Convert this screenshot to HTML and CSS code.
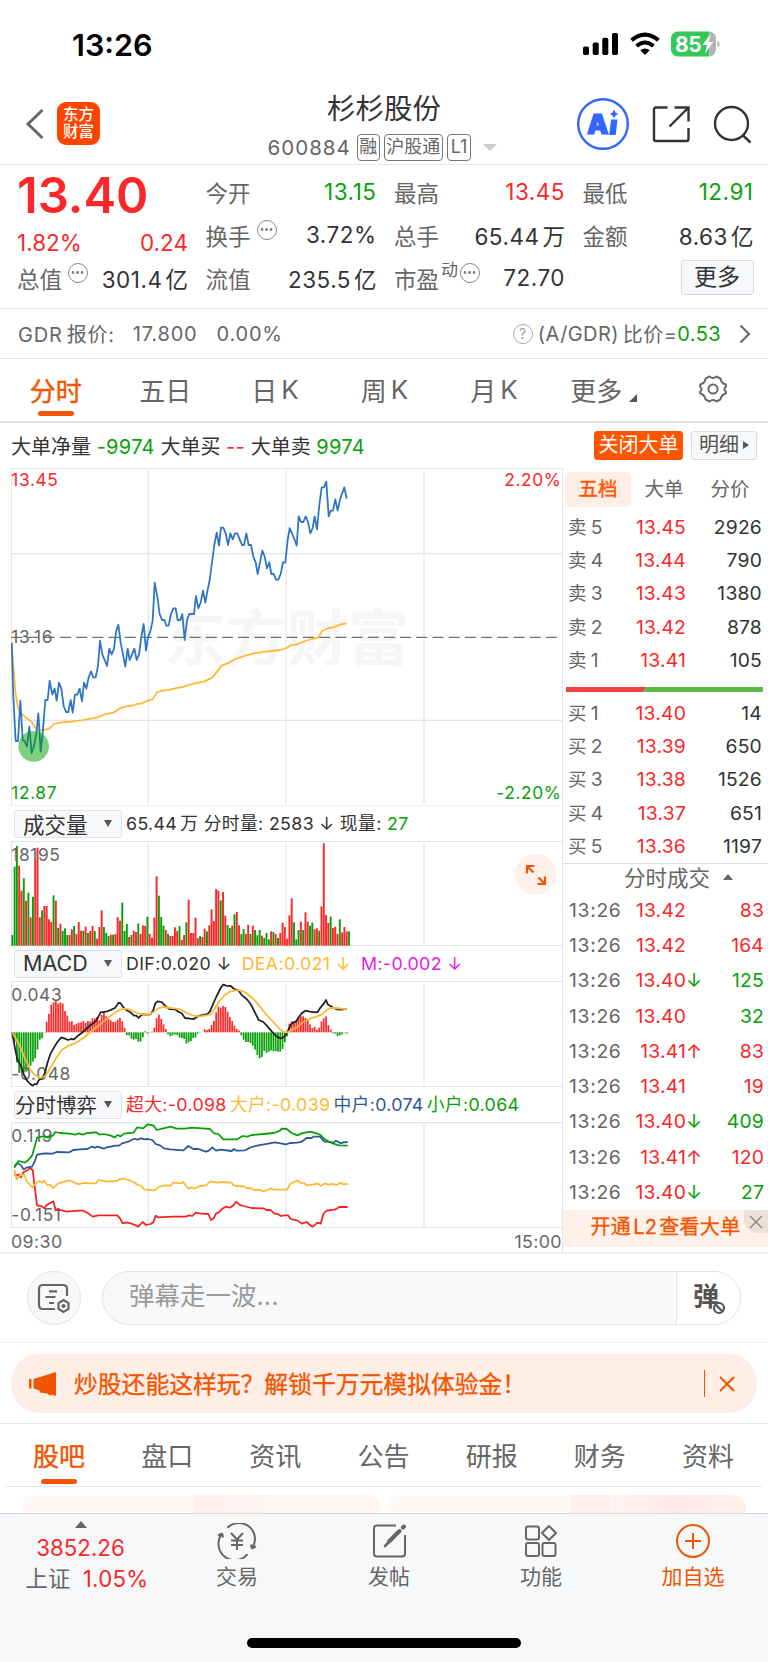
FILE: index.html
```html
<!DOCTYPE html>
<html lang="zh-CN">
<head>
    <meta charset="UTF-8">
    <meta name="viewport" content="width=device-width, initial-scale=1.0">
    <title>杉杉股份 600884</title>
    <link rel="stylesheet" href="styles.css">
</head>
<body>
    <div class="status-bar">
        <span class="clock">13:26</span>
        <div class="status-icons">
            <svg width="36" height="24" viewBox="0 0 36 24">
                <rect x="0" y="14.5" width="6" height="8.5" rx="1.8"/>
                <rect x="9.7" y="10.5" width="6" height="12.5" rx="1.8"/>
                <rect x="19.3" y="5.7" width="6" height="17.3" rx="1.8"/>
                <rect x="29" y="1" width="6" height="22" rx="1.8"/>
            </svg>
            <svg width="30" height="24" viewBox="0 0 30 24">
                <g fill="none" stroke="#000" stroke-width="4">
                    <path d="M1.6 8.2Q15-3 28.4 8.2"/>
                    <path d="M6.6 14Q15 6.9 23.4 14"/>
                </g>
                <path d="M10.3 18.2Q15 14.6 19.7 18.2L15 23Z"/>
            </svg>
            <svg width="49" height="26" viewBox="0 0 49 26">
                <defs><clipPath id="cell"><rect x="0" y="0.5" width="45" height="25" rx="7"/></clipPath></defs>
                <g clip-path="url(#cell)">
                    <rect width="38.5" height="26" fill="#34c759"/>
                    <rect x="38.5" width="8" height="26" fill="#b3b3b3"/>
                </g>
                <path d="M46.5 9.5Q48.6 10.5 48.6 13T46.5 16.5Z" fill="#b3b3b3"/>
                <text class="cell-text" x="4" y="20.6">85</text>
                <path d="M39.5 3L31.5 14H36L34 22.5L42.3 11H37.6Z" fill="#fff"/>
            </svg>
        </div>
    </div>

    <header class="header">
        <div class="header-left">
            <svg width="20" height="32" viewBox="0 0 20 32" fill="none" stroke="#666" stroke-width="3"><path d="M17.5 2L3 16L17.5 30"/></svg>
            <div class="brand">东方<br>财富</div>
        </div>
        <div class="title">
            <h1>杉杉股份</h1>
            <div class="code">
                <span class="code-num">600884</span>
                <span class="tag">融</span>
                <span class="tag">沪股通</span>
                <span class="tag">L1</span>
                <i class="tri-down"></i>
            </div>
        </div>
        <div class="header-right">
            <svg width="52" height="52" viewBox="0 0 52 52">
                <circle cx="26" cy="26" r="24.8" fill="#fff" stroke="#3366ff" stroke-width="2.4"/>
                <text class="ai-text" x="10" y="36">A</text>
                <path d="M34 21.5H40.5L38.7 37H32.2Z" fill="#3366ff"/>
                <path d="M37 11.5L38.6 14.4L41.2 16L38.6 17.6L37 20.3L35.4 17.6L32.8 16L35.4 14.4Z" fill="#3366ff"/>
            </svg>
            <svg width="38" height="38" viewBox="0 0 38 38" fill="none" stroke="#333" stroke-width="2.4">
                <path d="M15.5 2.5H4Q2 2.5 2 4.5V34Q2 36 4 36H34.5Q36.5 36 36.5 34V23"/>
                <path d="M22.5 2.5H36.5V16.5M36 3L17.5 21.5"/>
            </svg>
            <svg width="39" height="39" viewBox="0 0 39 39" fill="none" stroke="#333" stroke-width="2.4">
                <circle cx="18.5" cy="18.5" r="16.5"/>
                <path d="M29.5 30L37.5 37.5"/>
            </svg>
        </div>
    </header>

    <section class="quote">
        <div class="quote-col quote-main">
            <div class="price red">13.40</div>
            <div class="change red"><span>1.82%</span><span>0.24</span></div>
            <div class="cell last"><label>总值</label><i class="more-dot"></i><b>301.4<em>亿</em></b></div>
        </div>
        <div class="quote-col">
            <div class="cell"><label>今开</label><b class="green">13.15</b></div>
            <div class="cell"><label>换手</label><i class="more-dot"></i><b>3.72%</b></div>
            <div class="cell"><label>流值</label><b>235.5<em>亿</em></b></div>
        </div>
        <div class="quote-col">
            <div class="cell"><label>最高</label><b class="red">13.45</b></div>
            <div class="cell"><label>总手</label><b>65.44<em>万</em></b></div>
            <div class="cell"><label>市盈</label><sup>动</sup><i class="more-dot tight"></i><b>72.70</b></div>
        </div>
        <div class="quote-col">
            <div class="cell"><label>最低</label><b class="green">12.91</b></div>
            <div class="cell"><label>金额</label><b>8.63<em>亿</em></b></div>
            <div class="cell"><button class="more-btn">更多</button></div>
        </div>
    </section>

    <section class="gdr">
        <span class="gdr-name">GDR<em>报价:</em></span>
        <span class="gdr-price">17.800</span>
        <span>0.00%</span>
        <span class="gdr-ratio"><i class="help">?</i>(A/GDR)<em>比价=</em><span class="green">0.53</span></span>
        <svg width="12" height="20" viewBox="0 0 12 20" fill="none" stroke="#666" stroke-width="2"><path d="M1.5 1.5L10 10L1.5 18.5"/></svg>
    </section>

    <nav class="tabs period-tabs">
        <a class="active">分时</a>
        <a>五日</a>
        <a>日<em>K</em></a>
        <a>周<em>K</em></a>
        <a>月<em>K</em></a>
        <a>更多<i class="tri-corner"></i></a>
        <a>
            <svg width="30" height="28" viewBox="0 0 30 28" fill="none" stroke="#666" stroke-width="2">
                <path d="M11.5 1.5Q15 4.5 18.5 1.5L22.5 3.6Q23 8 27.8 9.5V12Q25 14 27.8 16.5V18.5Q23 20 22.5 24.4L18.5 26.5Q15 23.5 11.5 26.5L7.5 24.4Q7 20 2.2 18.5V16.5Q5 14 2.2 12V9.5Q7 8 7.5 3.6Z" stroke-linejoin="round"/>
                <circle cx="15" cy="14" r="4.6"/>
            </svg>
        </a>
    </nav>

    <section class="big-order">
        <span>大单净量 <b class="green">-9974</b> 大单买 <b class="red">--</b> 大单卖 <b class="green">9974</b></span>
        <div class="big-order-btns">
            <button class="close-big">关闭大单</button>
            <button class="detail">明细<i class="tri-right"></i></button>
        </div>
    </section>

    <main class="board">
        <div class="charts">
            <svg class="plot price-plot" viewBox="33 24 1653 1014">
                <text class="watermark" x="492" y="602">东方财富</text>
                <path class="grid" d="M445 30V1032M858 30V1032M1272 30V1032M34 281H1686M34 781H1686"/>
                <path class="grid" d="M34 25H1686M34 1038H1686M34.5 24V1038"/>
                <path class="mid-line" d="M34 532H1686"/>
                <polyline class="line avg" points="35,548 40,620 46,695 54,745 65,762 80,775 95,785 105,803 115,811 130,810 148,806 162,792 185,787 215,785 250,780 292,772 315,763 340,758 363,743 385,738 402,736 410,732 422,731 445,722 458,718 470,698 485,692 510,689 525,685 552,680 570,674 595,668 612,665 637,653 665,617 690,607 705,597 740,586 765,579 800,575 840,570 860,564 872,556 890,553 915,543 935,537 955,533 966,513 985,505 1005,500 1020,494 1040,490"/>
                <polyline class="line price-line" points="35,548 40,710 47,843 54,843 61,722 68,840 74,843 81,860 88,800 95,880 102,858 109,820 115,760 122,875 129,810 136,720 143,720 149,662 157,704 164,686 170,722 177,668 184,686 191,738 198,756 205,756 212,720 218,758 225,704 232,704 239,686 246,724 252,668 259,686 266,652 273,634 280,652 287,652 294,617 300,542 307,583 314,600 321,618 328,566 335,583 342,566 348,515 355,494 362,548 369,583 376,620 383,566 389,600 396,583 403,566 410,600 417,583 424,530 431,492 438,572 444,532 451,514 458,482 464,368 472,410 479,462 486,480 493,480 499,497 506,497 513,462 520,445 527,445 533,480 541,480 547,462 554,540 561,480 568,462 582,462 588,408 595,445 602,428 609,392 616,428 622,395 629,360 637,300 643,255 650,218 657,257 663,203 670,203 677,220 684,255 691,220 698,238 705,220 712,220 719,238 726,255 732,255 739,220 746,255 753,255 760,290 767,307 773,342 780,307 787,272 794,290 801,325 808,307 814,342 821,342 828,359 835,359 842,342 849,307 856,307 863,240 869,204 876,220 883,237 890,257 896,169 903,186 910,186 917,169 924,186 931,220 938,204 944,169 951,208 958,135 965,82 972,82 979,65 986,169 992,152 999,152 1006,118 1013,152 1020,118 1033,82 1040,116"/>
                <circle cx="101" cy="859" r="46" fill="#00a000" fill-opacity="0.5"/>
                <text class="axis red" x="34" y="77">13.45</text>
                <text class="axis red" x="1684" y="77" text-anchor="end">2.20%</text>
                <text class="axis" x="34" y="548">13.16</text>
                <text class="axis green" x="34" y="1017">12.87</text>
                <text class="axis green" x="1684" y="1017" text-anchor="end">-2.20%</text>
            </svg>

            <div class="ind-head">
                <button class="ind-select">成交量<i class="tri-select"></i></button>
                <span class="ind-vals">65.44<em class="unit">万</em> 分时量: 2583 <i class="arr">↓</i> 现量: <b class="green">27</b></span>
            </div>
            <div class="plot-wrap">
                <svg class="plot volume-plot" viewBox="33 123 1653 315">
                    <path class="grid" d="M445 130V437M858 130V437M1272 130V437M34 124H1686M34 437H1686M34.5 123V438"/>
                    <g id="volumeBars"></g>
                    <text class="axis" x="34" y="182">18195</text>
                </svg>
                <div class="expand">
                    <svg width="22" height="22" viewBox="0 0 22 22" fill="none" stroke="#f25500" stroke-width="2.2">
                        <path d="M2 9.5V2H9.5M2 2L8.5 8.5M20 12.5V20H12.5M20 20L13.5 13.5"/>
                    </svg>
                </div>
            </div>

            <div class="ind-head">
                <button class="ind-select">MACD<i class="tri-select"></i></button>
                <span class="ind-vals macd-vals"><span>DIF:0.020 <i class="arr">↓</i></span><span class="amber">DEA:0.021 <i class="arr">↓</i></span><span class="magenta">M:-0.002 <i class="arr">↓</i></span></span>
            </div>
            <svg class="plot macd-plot" viewBox="33 3 1653 318">
                <path class="grid" d="M445 12V320M858 12V320M1272 12V320M34 4H1686M34 320H1686M34.5 3V321"/>
                <g id="macdBars"></g>
                <text class="axis" x="34" y="63">0.043</text>
                <text class="axis" x="34" y="301">-0.048</text>
                <polyline class="line dif" points="37,160 45,205 52,238 62,256 72,285 82,303 92,313 98,317 104,312 110,313 116,301 126,295 134,281 142,250 152,220 162,203 172,186 184,172 193,175 204,180 213,177 222,178 234,167 244,160 255,150 268,138 280,130 290,120 302,97 322,94 345,84 356,68 362,70 370,82 380,91 390,96 402,107 409,107 416,114 426,103 440,104 452,103 460,90 466,70 473,64 485,66 494,76 508,87 525,88 535,95 545,100 555,114 570,116 582,117 588,112 600,107 622,102 630,94 640,70 650,48 662,24 670,14 678,17 692,18 703,27 716,32 727,47 740,57 752,72 762,92 776,120 790,126 803,140 815,154 828,168 835,172 842,175 850,172 857,166 864,152 872,134 880,127 888,125 896,112 905,100 916,92 930,95 945,97 953,96 962,82 972,70 978,60 984,74 992,78 1000,84 1012,88 1025,89 1040,86"/>
                <polyline class="line dea" points="37,158 50,180 62,204 75,235 90,267 100,281 112,290 122,294 132,291 142,279 155,257 170,232 185,210 200,200 225,190 250,174 275,153 300,133 322,115 345,98 360,89 375,86 390,89 410,99 430,104 450,103 462,95 475,85 490,81 515,84 540,88 560,99 580,107 600,109 620,106 632,103 645,85 660,61 675,45 690,35 705,31 720,31 735,37 750,48 765,62 780,80 800,105 820,126 840,148 850,155 862,157 875,151 890,142 910,126 930,116 950,110 965,103 980,91 990,84 1005,84 1025,86 1040,87"/>
            </svg>

            <div class="ind-head">
                <button class="ind-select wide-select">分时博弈<i class="tri-select"></i></button>
                <span class="ind-vals game-vals"><span class="red">超大:-0.098</span><span class="amber">大户:-0.039</span><span class="navy">中户:0.074</span><span class="green">小户:0.064</span></span>
            </div>
            <svg class="plot game-plot" viewBox="33 426 1653 318">
                <path class="grid" d="M445 434V742M858 434V742M1272 434V742M34 428H1686M34 743H1686M34.5 426V744"/>
                <text class="axis" x="34" y="485">0.119</text>
                <text class="axis" x="34" y="722">-0.151</text>
                <polyline class="line super" points="43,583 50,586 56,583 63,592 71,576 84,570 90,564 98,570 104,620 111,676 126,679 133,685 140,675 152,668 160,664 167,690 180,690 200,695 235,692 250,692 265,700 278,710 295,706 330,706 352,706 360,715 368,730 380,727 395,731 415,740 428,726 438,735 452,732 460,727 467,707 475,712 520,710 557,710 567,706 577,708 587,698 600,700 625,702 633,720 642,714 648,700 655,698 665,688 677,680 690,683 700,676 708,665 718,674 730,678 755,684 790,685 800,690 812,690 822,700 835,703 842,708 855,706 864,706 872,717 893,722 905,731 920,726 930,735 937,740 945,735 952,728 962,731 970,702 980,692 995,690 1007,688 1018,681 1043,681"/>
                <polyline class="line big" points="43,570 50,598 60,587 72,584 80,603 90,615 98,622 105,612 118,603 126,608 133,602 142,615 150,614 160,624 172,612 185,607 208,601 222,607 235,613 250,609 288,610 296,600 308,602 320,605 350,603 360,597 370,596 385,600 400,606 410,613 425,618 432,628 465,631 475,621 495,616 512,617 520,608 545,610 550,606 565,626 575,622 582,626 600,618 618,616 630,605 640,606 655,608 665,606 695,608 700,616 710,618 732,619 740,624 755,625 762,630 780,630 788,634 805,630 812,625 820,629 862,629 870,612 882,606 893,602 905,610 912,609 920,616 935,614 955,611 962,618 975,610 985,614 1000,612 1010,615 1022,608 1030,613 1043,612"/>
                <polyline class="line mid" points="43,560 50,550 58,552 64,558 71,568 82,562 96,560 104,545 111,524 135,520 158,521 170,516 208,517 220,510 240,508 262,507 275,500 285,503 292,500 312,506 320,502 348,497 357,497 366,490 385,485 402,476 412,479 422,475 435,478 445,477 457,480 467,492 480,496 492,505 510,508 550,511 565,498 580,507 595,507 617,515 627,512 637,502 648,512 662,509 695,513 702,507 710,512 735,511 755,501 775,496 805,491 825,487 858,493 870,489 892,488 905,485 920,474 935,474 940,470 960,470 972,484 990,486 1000,488 1008,482 1022,490 1030,487 1043,486"/>
                <polyline class="line small" points="43,563 50,552 56,543 75,548 85,540 96,527 104,500 111,473 128,469 145,473 158,467 166,456 180,459 208,461 225,464 237,460 248,464 262,459 290,457 298,464 312,462 330,466 345,472 352,465 362,469 372,461 400,458 412,442 430,445 442,433 460,436 470,450 490,445 512,440 530,446 555,446 575,443 605,445 630,447 642,460 655,462 670,478 712,478 728,468 742,470 755,465 790,462 822,459 840,452 845,446 860,447 875,459 892,466 905,460 930,455 950,460 962,465 972,476 985,484 1000,491 1018,496 1043,497"/>
            </svg>
            <div class="time-axis"><span>09:30</span><span>15:00</span></div>
        </div>

        <aside class="side">
            <div class="side-tabs"><a class="active">五档</a><a>大单</a><a>分价</a></div>
            <ul class="levels">
                <li><label>卖<em>5</em></label><b>13.45</b><span>2926</span></li>
                <li><label>卖<em>4</em></label><b>13.44</b><span>790</span></li>
                <li><label>卖<em>3</em></label><b>13.43</b><span>1380</span></li>
                <li><label>卖<em>2</em></label><b>13.42</b><span>878</span></li>
                <li><label>卖<em>1</em></label><b>13.41</b><span>105</span></li>
            </ul>
            <svg class="ratio" width="197" height="5" viewBox="0 0 197 5"><path fill="#ee4444" d="M0 0H81L77 5H0Z"/><path fill="#5bb947" d="M81 0H197V5H77Z"/></svg>
            <ul class="levels">
                <li><label>买<em>1</em></label><b>13.40</b><span>14</span></li>
                <li><label>买<em>2</em></label><b>13.39</b><span>650</span></li>
                <li><label>买<em>3</em></label><b>13.38</b><span>1526</span></li>
                <li><label>买<em>4</em></label><b>13.37</b><span>651</span></li>
                <li><label>买<em>5</em></label><b>13.36</b><span>1197</span></li>
            </ul>
            <div class="ticks-head">分时成交<i class="tri-up"></i></div>
            <ul class="ticks">
                <li><time>13:26</time><b>13.42</b><i></i><span class="red">83</span></li>
                <li><time>13:26</time><b>13.42</b><i></i><span class="red">164</span></li>
                <li><time>13:26</time><b>13.40</b><i class="green">↓</i><span class="green">125</span></li>
                <li><time>13:26</time><b>13.40</b><i></i><span class="green">32</span></li>
                <li><time>13:26</time><b>13.41</b><i class="red">↑</i><span class="red">83</span></li>
                <li><time>13:26</time><b>13.41</b><i></i><span class="red">19</span></li>
                <li><time>13:26</time><b>13.40</b><i class="green">↓</i><span class="green">409</span></li>
                <li><time>13:26</time><b>13.41</b><i class="red">↑</i><span class="red">120</span></li>
                <li><time>13:26</time><b>13.40</b><i class="green">↓</i><span class="green">27</span></li>
            </ul>
            <div class="l2-promo">
                开通<em>L2</em>查看大单
                <span class="l2-close"><svg width="14" height="14" viewBox="0 0 14 14" stroke="#8c8580" stroke-width="1.4"><path d="M1 1L13 13M13 1L1 13"/></svg></span>
            </div>
        </aside>
    </main>

    <section class="danmu">
        <div class="danmu-set">
            <svg width="34" height="31" viewBox="0 0 34 31" fill="none" stroke="#666" stroke-width="2.2">
                <path d="M18 26H6Q2 26 2 22V6Q2 2 6 2H26Q30 2 30 6V13M12 8.3H20M8.5 14H18.5M12 20H17"/>
                <path d="M26.5 17L31.5 20V26L26.5 29L21.5 26V20Z"/>
                <circle cx="26.5" cy="23" r="1" fill="#666"/>
            </svg>
        </div>
        <div class="danmu-box">
            <span class="danmu-input">弹幕走一波...</span>
            <span class="danmu-toggle">弹<svg width="14" height="14" viewBox="0 0 14 14" fill="#fff" stroke="#555" stroke-width="2.2"><circle cx="7" cy="7" r="5"/><path d="M3.5 3.5L10.5 10.5"/></svg></span>
        </div>
    </section>

    <section class="notice-wrap">
        <div class="notice">
            <svg width="28" height="26" viewBox="0 0 28 26" fill="#f25500"><path d="M0 8H2.5V17.5H0ZM4.5 8L27 1V25L22 23.5L21.5 25L18 22.5L11 21.5L10.5 19.5L4.5 17.5Z"/></svg>
            <span class="notice-text">炒股还能这样玩？解锁千万元模拟体验金！</span>
            <span class="notice-close"><svg width="16" height="16" viewBox="0 0 16 16" stroke="#f25500" stroke-width="2"><path d="M1 1L15 15M15 1L1 15"/></svg></span>
        </div>
    </section>

    <nav class="tabs info-tabs">
        <a class="active">股吧</a>
        <a>盘口</a>
        <a>资讯</a>
        <a>公告</a>
        <a>研报</a>
        <a>财务</a>
        <a>资料</a>
    </nav>
    <div class="cards"><div class="card"></div><div class="card card-alt"></div></div>

    <footer class="bottom-nav">
        <div class="nav-index">
            <i class="tri-up"></i>
            <span class="red">3852.26</span>
            <span><em>上证</em><b class="red">1.05%</b></span>
        </div>
        <div class="nav-item">
            <svg width="40" height="36" viewBox="0 0 40 36" fill="none" stroke="#666" stroke-width="2">
                <path d="M10.5 4.8A16 16 0 0 1 34.8 25.5L39 23.5M34.8 25.500L34 21.5M30.5 31.2A16 16 0 0 1 5.2 10.5L1 12.5M5.2 10.5L6 14.5"/>
                <path d="M14 10L20 16.5L26 10M20 16.5V27M14 17.5H26M14 22H26"/>
            </svg>
            <span>交易</span>
        </div>
        <div class="nav-item">
            <svg width="34" height="36" viewBox="0 0 34 36" fill="none" stroke="#666" stroke-width="2">
                <path d="M24 2.5H5Q2 2.5 2 5.5V30.5Q2 33.5 5 33.5H30Q33 33.5 33 30.5V12"/>
                <path d="M27.5 8L17 18.5M31 4.5L32 3.5" stroke-width="4" stroke-linecap="round"/>
                <path d="M20 16L13 23" stroke-width="2.6" stroke-linecap="round"/>
            </svg>
            <span>发帖</span>
        </div>
        <div class="nav-item">
            <svg width="32" height="36" viewBox="0 0 32 36" fill="none" stroke="#666" stroke-width="2">
                <rect x="1" y="3.5" width="13" height="13" rx="2"/>
                <rect x="1" y="20" width="13" height="13" rx="2"/>
                <rect x="17.5" y="20" width="13" height="13" rx="2"/>
                <path d="M24 3L31 10L24 17L17 10Z" stroke-linejoin="round"/>
            </svg>
            <span>功能</span>
        </div>
        <div class="nav-item orange">
            <svg width="36" height="36" viewBox="0 0 36 36" fill="none" stroke="#f25500" stroke-width="2">
                <circle cx="18" cy="18" r="16"/>
                <path d="M10 18H26M18 10V26"/>
            </svg>
            <span>加自选</span>
        </div>
        <div class="home-bar"></div>
    </footer>

    <script src="script.js"></script>
</body>
</html>
```

FILE: styles.css
```css
* {
    box-sizing: border-box;
    margin: 0;
    padding: 0;
}

body {
    width: 768px;
    height: 1662px;
    overflow: hidden;
    background: #fff;
    color: #333;
    font-family: 'Inter', 'Noto Sans CJK SC', sans-serif;
}

em, i, b, h1 {
    font-style: normal;
    font-weight: 400;
}

ul { list-style: none; }

button {
    font-family: inherit;
    color: inherit;
    white-space: nowrap;
}

svg { display: block; flex: none; }

.red { color: #fa2828; fill: #fa2828; }
.green { color: #0aa00a; fill: #0aa00a; }
.amber { color: #ffb833; }
.magenta { color: #e619e6; }
.navy { color: #2b5797; }
.orange { color: #f25500; }

/* status bar */
.status-bar {
    display: flex;
    justify-content: space-between;
    height: 88px;
    padding: 0 48px 0 72px;
    align-items: center;
}

.clock {
    font-size: 30.5px;
    font-weight: 600;
    color: #000;
}

.status-icons {
    display: flex;
    align-items: center;
    gap: 11px;
}

.cell-text {
    font-size: 21px;
    font-weight: 700;
    fill: #fff;
    letter-spacing: -0.5px;
}

/* header */
.header {
    display: grid;
    grid-template-columns: 1fr 220px 1fr;
    height: 77px;
    border-bottom: 1px solid #e6e6e8;
}

.header-left {
    display: flex;
    align-items: center;
    gap: 12px;
    height: 71px;
    padding-left: 25px;
}

.brand {
    width: 43px;
    height: 43px;
    padding-top: 4px;
    border-radius: 9px;
    background: #ff4400;
    color: #fff;
    font-size: 15.5px;
    font-weight: 500;
    line-height: 17px;
    text-align: center;
}

.title {
    display: flex;
    flex-direction: column;
    align-items: center;
}

.title h1 {
    height: 42px;
    font-size: 28.5px;
    line-height: 41px;
}

.code {
    display: flex;
    align-items: center;
    height: 34px;
    margin-right: 3px;
    color: #666;
    font-size: 20.5px;
    white-space: nowrap;
}

.code-num { letter-spacing: 1px; margin-right: 6px; }

.tag {
    height: 27px;
    margin-right: 4px;
    padding: 0 1.5px;
    border: 1px solid #777;
    border-radius: 4px;
    font-size: 18px;
    line-height: 24px;
}

.tag:nth-child(4) { padding: 0 3px; }

.tri-down {
    margin-left: 8px;
    border: 7px solid transparent;
    border-top-color: #ccc;
    border-bottom: 0;
}

.header-right {
    display: flex;
    justify-content: flex-end;
    align-items: center;
    gap: 23px;
    height: 72px;
    padding-right: 16px;
}

.ai-text {
    font-size: 27px;
    font-weight: 900;
    fill: #3366ff;
    stroke: #3366ff;
    stroke-width: 1.2;
}

/* quote */
.quote {
    display: grid;
    grid-template-columns: 171px 171px 171px 171px;
    column-gap: 17.5px;
    height: 144px;
    padding: 5px 16px 0 17px;
    border-bottom: 1px solid #e6e6e8;
}

.price {
    height: 50px;
    font-size: 49px;
    font-weight: 600;
    line-height: 51px;
}

.change {
    display: flex;
    justify-content: space-between;
    height: 36px;
    font-size: 22.5px;
    line-height: 45px;
}

.cell {
    display: flex;
    align-items: center;
    height: 43px;
    white-space: nowrap;
}

.cell label {
    color: #666;
    font-size: 22.5px;
}

.cell b {
    margin-left: auto;
    font-size: 22.5px;
    letter-spacing: 0.5px;
}

.cell em { margin-left: 3px; letter-spacing: 0; }

.cell sup {
    align-self: flex-start;
    margin: 2px 0 0 2px;
    color: #666;
    font-size: 17px;
    line-height: 25px;
}

.more-dot {
    width: 20px;
    height: 20px;
    margin: -9px 0 0 6px;
    border: 1.5px solid #888;
    border-radius: 50%;
    background:
        radial-gradient(circle at 4px 8.5px, #888 1.2px, transparent 1.7px),
        radial-gradient(circle at 8.5px 8.5px, #888 1.2px, transparent 1.7px),
        radial-gradient(circle at 13px 8.5px, #888 1.2px, transparent 1.7px);
}

.more-dot.tight { margin-left: 2px; }

.more-btn {
    width: 73px;
    height: 35px;
    margin: 0 0 0 auto;
    border: 1px solid #d8dbe4;
    border-radius: 3px;
    background: #f7f8fa;
    font-size: 23px;
    line-height: 31px;
}

/* gdr */
.gdr {
    display: flex;
    align-items: center;
    height: 50px;
    padding: 0 17px 0 18px;
    border-bottom: 1px solid #e6e6e8;
    color: #666;
    font-size: 20px;
    letter-spacing: 0.8px;
}

.gdr-name em { margin-left: 4px; }
.gdr-name { margin-right: 18px; }
.gdr-price { margin-right: 19px; }
.gdr-ratio {
    display: flex;
    align-items: center;
    margin-left: auto;
    margin-right: 18px;
    letter-spacing: 0.4px;
}
.gdr-ratio em { margin-left: 4px; }

.help {
    width: 20px;
    height: 20px;
    margin-right: 5px;
    border: 1.5px solid #aaa;
    border-radius: 50%;
    color: #999;
    font-size: 14px;
    line-height: 18px;
    text-align: center;
}

/* tabs */
.tabs {
    display: grid;
    grid-template-columns: repeat(7, 1fr);
    color: #666;
}

.tabs a {
    position: relative;
    display: flex;
    justify-content: center;
    align-items: center;
    padding-bottom: 2px;
    font-size: 26px;
}

.tabs em { margin-left: 4px; padding-top: 1px; }
.tabs .active { color: #f25500; -webkit-text-stroke: 0.4px #f25500; }

.tabs .active::after {
    content: '';
    position: absolute;
    left: calc(50% - 18px);
    bottom: 5px;
    width: 36px;
    height: 5px;
    border-radius: 2.5px;
    background: #f25500;
}

.period-tabs {
    height: 64px;
    padding-left: 1px;
    border-bottom: 2px solid #dfe2ea;
}

.tri-corner {
    margin: 18px 0 0 7px;
    border-left: 8px solid transparent;
    border-bottom: 8px solid #555;
}

/* big orders */
.big-order {
    display: flex;
    justify-content: space-between;
    align-items: center;
    height: 45px;
    padding: 0 11px 1px 11px;
    font-size: 20px;
    white-space: nowrap;
}

.big-order b { font-size: 20px; letter-spacing: 0.3px; }
.big-order-btns { display: flex; gap: 8px; }

.big-order button {
    height: 29px;
    border: 1px solid #ff5500;
    border-radius: 3px;
    font-size: 20px;
    line-height: 25px;
}

.close-big {
    width: 89px;
    background: #ff5500;
    color: #fff !important;
}

.big-order .detail {
    display: flex;
    justify-content: center;
    align-items: center;
    width: 66px;
    border-color: #d8dbe4;
    background: #f7f8fa;
    color: #555;
}

.tri-right {
    margin-left: 4px;
    border: 4px solid transparent;
    border-left: 6px solid #555;
    border-right: 0;
}

/* charts */
.board {
    display: grid;
    grid-template-columns: 562px 206px;
    height: 786px;
    border-bottom: 2px solid #eeeff2;
}

.charts { padding-left: 11px; }

.plot { width: 551px; }
.price-plot { height: 338px; }
.volume-plot { height: 105px; }
.macd-plot, .game-plot { height: 106px; }

.grid { fill: none; stroke: #e0e4ec; stroke-width: 3.5; }
.mid-line { fill: none; stroke: #707070; stroke-width: 4; stroke-dasharray: 33 15.6; }
.line { fill: none; stroke-width: 5.3; stroke-linejoin: round; }
.avg, .dea, .big { stroke: #ffb833; }
.price-line { stroke: #2e75c4; }
.dif { stroke: #222; }
.super { stroke: #f52222; }
.mid { stroke: #2b5797; }
.small { stroke: #0aa00a; }
.bar-up { fill: #fa2828; }
.bar-down { fill: #0aa00a; }

.axis { font-size: 52px; fill: #666; letter-spacing: 1.8px; }
.axis.red { fill: #fa2828; }
.axis.green { fill: #0aa00a; }
.watermark { font-size: 184px; font-weight: 700; fill: #f6f6f7; }

.ind-head {
    display: flex;
    align-items: center;
    height: 35px;
    padding-left: 3px;
}

.ind-select {
    display: flex;
    justify-content: space-between;
    align-items: center;
    width: 108px;
    height: 28px;
    margin-right: 4px;
    padding: 0 9px 1px 8px;
    border: 1px solid #dfe2ea;
    border-radius: 3px;
    background: #f7f8fa;
    font-size: 21.5px;
}

.wide-select { padding-left: 0; font-size: 20.5px; }

.tri-select {
    border: 4px solid transparent;
    border-top: 7px solid #555;
    border-bottom: 0;
}

.ind-vals {
    font-size: 17.8px;
    letter-spacing: 0.35px;
    line-height: 35px;
    white-space: pre;
}

.unit { margin-left: 3px; }
.macd-vals { display: flex; gap: 10px; }
.game-vals { display: flex; gap: 3px; }

.plot-wrap { position: relative; }

.expand {
    position: absolute;
    right: 6px;
    top: 13px;
    display: flex;
    justify-content: center;
    align-items: center;
    width: 41px;
    height: 41px;
    border-radius: 50%;
    background: #fff0e9;
}

.time-axis {
    display: flex;
    justify-content: space-between;
    height: 26px;
    color: #666;
    font-size: 17.8px;
    letter-spacing: 0.4px;
    line-height: 28px;
}

/* right panel */
.side {
    border-left: 1px solid #e0e4ec;
}

.side-tabs {
    display: grid;
    grid-template-columns: 66px 66px 66px;
    margin: 4px 0 4px 2px;
    color: #666;
    font-size: 19.5px;
    line-height: 35px;
    text-align: center;
}

.side-tabs .active {
    border-radius: 5px;
    background: #ffeee6;
    color: #ff5500;
    -webkit-text-stroke: 0.4px #ff5500;
}

.levels li {
    display: grid;
    grid-template-columns: 50px 68px 76px;
    height: 33.2px;
    padding-left: 5px;
    font-size: 19.3px;
    letter-spacing: 0.2px;
    line-height: 33.8px;
}

.levels label { color: #666; font-size: 18.5px; }
.levels label em { margin-left: 4px; font-size: 19.3px; }
.levels b { color: #fa2828; text-align: right; }
.levels span { text-align: right; }

.ratio { margin: 10px 0 5px 3px; }

.ticks-head {
    display: flex;
    justify-content: center;
    align-items: center;
    gap: 13px;
    height: 30px;
    padding: 0 0 3px 26px;
    border-top: 1px solid #d9dce4;
    color: #666;
    font-size: 21.5px;
}

.tri-up {
    border: 5px solid transparent;
    border-bottom: 6px solid #666;
    border-top: 0;
}

.ticks li {
    display: grid;
    grid-template-columns: 55px 62px 15px 63px;
    height: 35.25px;
    padding-left: 6px;
    font-size: 19.3px;
    letter-spacing: 0.2px;
    line-height: 35.7px;
}

.ticks time { color: #666; letter-spacing: 0.7px; }
.ticks b { color: #fa2828; text-align: right; }
.ticks span { text-align: right; }

.l2-promo {
    position: relative;
    height: 37px;
    background: #fff0e9;
    color: #f25500;
    font-size: 20px;
    letter-spacing: 0.3px;
    line-height: 35px;
    text-align: center;
    -webkit-text-stroke: 0.3px #f25500;
}

.l2-promo em { margin: 0 2px; }

.l2-close {
    position: absolute;
    right: 0;
    top: 0;
    display: flex;
    justify-content: center;
    align-items: center;
    width: 24px;
    height: 23px;
    border-bottom-left-radius: 14px;
    background: #ebe0db;
}

/* danmu */
.danmu {
    display: flex;
    align-items: center;
    gap: 21px;
    height: 89px;
    padding: 0 27px;
    border-bottom: 1px solid #f3f4f6;
}

.danmu-set {
    display: flex;
    justify-content: center;
    align-items: center;
    width: 54px;
    height: 54px;
    border: 1px solid #dfe2e8;
    border-radius: 50%;
    background: #f7f8fa;
}

.danmu-box {
    display: flex;
    width: 639px;
    height: 54px;
    border: 1px solid #dfe2e8;
    border-radius: 27px;
    background: #f7f8fa;
    overflow: hidden;
}

.danmu-input {
    flex: 1;
    padding-left: 26px;
    color: #999;
    font-size: 25.5px;
    line-height: 47px;
}

.danmu-toggle {
    position: relative;
    width: 64px;
    padding-left: 16px;
    border-left: 1px solid #dfe2e8;
    background: #fff;
    color: #555;
    font-size: 26px;
    font-weight: 700;
    line-height: 50px;
}

.danmu-toggle svg {
    position: absolute;
    left: 35px;
    top: 29px;
}

/* notice */
.notice-wrap {
    height: 81px;
    padding: 11px 11px 0 11px;
    border-bottom: 1px solid #e4e7ee;
}

.notice {
    display: flex;
    align-items: center;
    height: 59px;
    padding: 0 22px 0 18px;
    border-radius: 28px;
    background: #ffeee6;
    color: #f25500;
}

.notice-text {
    margin-left: 17px;
    padding-bottom: 2px;
    font-size: 23.8px;
    white-space: nowrap;
    -webkit-text-stroke: 0.3px #f25500;
}

.notice-close {
    display: flex;
    align-items: center;
    height: 27px;
    margin-left: auto;
    padding-left: 14px;
    border-left: 1.5px solid #f25500;
}

.info-tabs {
    height: 63px;
    padding: 0 6px 0 5px;
}

.info-tabs a { border-bottom: 1px solid #e4e7ee; }
.info-tabs .active::after { bottom: 2px; }

.cards {
    display: flex;
    gap: 8px;
    height: 26px;
    padding: 8px 22px 0;
}

.card {
    flex: 1;
    border-radius: 12px 12px 0 0;
    background: linear-gradient(90deg, #fff8f6 48%, #fff0ee 48%, #fff3f0 68%, #fff6f4 68%);
}

.card-alt {
    background: linear-gradient(90deg, #fff8f6 51%, #ffefed 51%, #fff0ee 62%, #fff4f2 62%, #ffe9e7 80%, #fff0ee 94%);
}

/* bottom nav */
.bottom-nav {
    position: relative;
    display: grid;
    grid-template-columns: 161px repeat(4, 152px);
    height: 149px;
    border-top: 1px solid #d5d8e0;
    background: #f7f8fa;
    color: #666;
}

.nav-index {
    display: flex;
    flex-direction: column;
    align-items: center;
    padding-top: 7px;
    font-size: 22.3px;
    line-height: 31px;
    white-space: nowrap;
}

.nav-index .tri-up {
    border-width: 0 6.5px 7px;
}

.nav-index em { margin-right: 12px; }
.nav-index > span:nth-child(2) { margin-top: 4px; }
.nav-index > span:nth-child(3) { padding-left: 13px; letter-spacing: 0.3px; }

.nav-item {
    display: flex;
    flex-direction: column;
    align-items: center;
    padding-top: 9px;
    font-size: 21px;
    line-height: 36px;
}

.home-bar {
    position: absolute;
    left: 247px;
    bottom: 14px;
    width: 274px;
    height: 10px;
    border-radius: 5px;
    background: #000;
}
```

FILE: script.js
```js
const STEP = 6.87;
const START = 37;

// u - up, d - down, number - bar height
const volume = 'd32 d237 d299 u240 u165 d202 u135 d159 u85 d147 u256 u294 u85 d106 u119 u119 u79 u71 d151 u135 d53 u66 d44 d52 d32 u32 u49 d59 u35 u71 u45 d45 u57 d38 u44 u59 d44 u21 u56 u106 d56 d38 d29 u33 d33 u35 u86 u75 d129 d44 d65 u26 d32 u45 u41 d67 u35 u61 u59 d87 u35 u24 u84 u208 d150 d86 d60 u47 d35 u29 u29 u55 u44 d59 u17 u32 d70 u138 u38 u38 u84 u23 d29 u26 u51 d43 u61 u109 u74 u170 u165 d136 u161 u90 d62 d53 u60 d94 u101 u61 d35 d50 u35 u63 d35 u60 d47 d31 d47 u30 d23 d38 d19 u43 d41 u35 d23 u38 u69 u56 u21 u91 u142 d70 d19 d47 u72 d47 u100 u72 d60 d69 u49 u52 d45 u118 u307 u92 u68 d87 u53 u57 u35 d79 u40 u56 u43 d43'.split(' ');

const macd = [-5, -30, -90, -122, -118, -120, -118, -115, -100, -88, -78, -52, -22, -18, -1,
    32, 55, 83, 90, 94, 86, 90, 86, 64, 50, 32, 33, 22, 26, 29, 30, 34, 28, 34, 33, 42, 42, 46, 36, 52,
    60, 48, 40, 36, 31, 32, 38, 43, 33, 14, -8, -9, -19, -22, -20, -28, -28, -15, 3, -4, -1, 2, 14, 42,
    53, 40, 24, 10, -6, -12, -9, -6, -8, -16, -17, -20, -34, -30, -26, -17, -15, -4, -1, 0, 9, 7, 10, 22,
    34, 60, 77, 74, 79, 76, 62, 46, 34, 20, 10, 5, -9, -22, -29, -29, -32, -40, -52, -68, -78, -74, -56,
    -62, -58, -54, -57, -56, -58, -58, -50, -30, -12, 26, 33, 30, 37, 44, 48, 48, 43, 40, 24, 13, 17, 7,
    14, 33, 42, 48, 22, 8, -3, -4, -11, -9, -6, 1, -4];

function addBar(group, index, top, height, up, width) {
    const rect = document.createElementNS('http://www.w3.org/2000/svg', 'rect');
    rect.setAttribute('x', (START + index * STEP - width / 2).toFixed(2));
    rect.setAttribute('y', top);
    rect.setAttribute('width', width);
    rect.setAttribute('height', height);
    rect.setAttribute('class', up ? 'bar-up' : 'bar-down');
    group.appendChild(rect);
}

const volumeGroup = document.getElementById('volumeBars');
volume.forEach((item, i) => {
    const height = Number(item.slice(1));
    addBar(volumeGroup, i, 437 - height, height, item[0] === 'u', 5.8);
});

const macdGroup = document.getElementById('macdBars');
macd.forEach((value, i) => {
    addBar(macdGroup, i, value > 0 ? 157 - value : 157, Math.abs(value), value > 0, 5.2);
});
```
